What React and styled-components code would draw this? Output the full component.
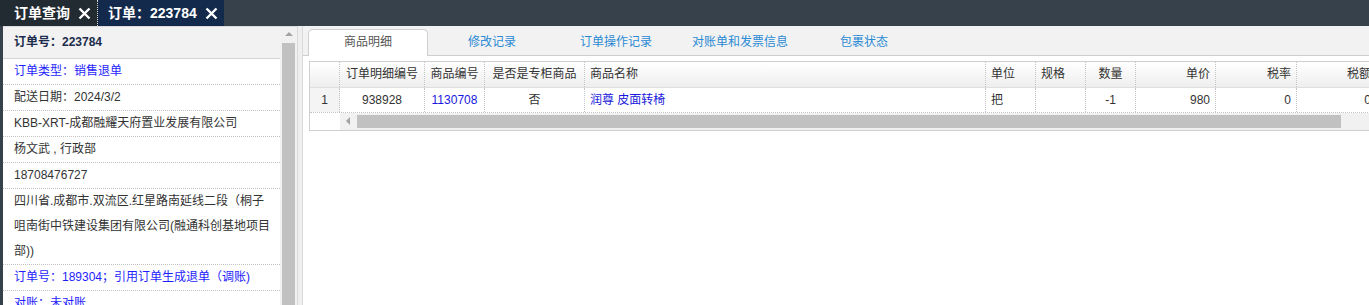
import React from 'react'
import styled, { createGlobalStyle } from 'styled-components'

const GlobalStyle = createGlobalStyle`
    html, body {
        margin: 0;
        padding: 0;
        height: 100%;
        overflow: hidden;
        background: #37414c;
    }
    body {
        font-family: "Liberation Sans", "Noto Sans CJK SC", sans-serif;
        font-size: 12px;
        color: #333;
    }
    #root {
        height: 100%;
    }
`

const Page = styled.div`
    display: flex;
    flex-direction: column;
    height: 100vh;
`

const TopBar = styled.div`
    display: flex;
    height: 26px;
    flex-shrink: 0;
    background: #37414c;
`

const PageTab = styled.div`
    display: flex;
    align-items: center;
    gap: 8px;
    padding: 0 6px 0 ${p => p.$padLeft || 12}px;
    background: ${p => (p.$active ? '#142a4c' : '#222a32')};
    border-right: ${p => (p.$active ? 'none' : '1px dotted #d8d8d8')};
    color: #fff;
    font-size: 14px;
    font-weight: bold;
    line-height: 26px;
    white-space: nowrap;
`

const CloseIcon = () => (
    <svg width="13" height="13" viewBox="0 0 13 13">
        <path d="M1.5 1.5 L11.5 11.5 M11.5 1.5 L1.5 11.5" stroke="#fff" strokeWidth="2.4" />
    </svg>
)

const Main = styled.div`
    flex: 1;
    display: flex;
    min-height: 0;
    padding-left: 3px;
`

const Sidebar = styled.div`
    width: 294px;
    flex-shrink: 0;
    display: flex;
    background: #fff;
    border-top: 1px solid #dcdcdc;
`

const SideContent = styled.div`
    flex: 1;
    overflow: hidden;
`

const SideHeader = styled.div`
    height: 31px;
    line-height: 31px;
    padding-left: 11px;
    background: #f2f2f2;
    border-bottom: 1px solid #d4d4d4;
    color: #1d2c4c;
    font-weight: bold;
`

const InfoRow = styled.div`
    padding: 0 8px 0 11px;
    line-height: 25px;
    border-bottom: 1px dotted #c2c2c2;
    color: ${p => (p.$link ? '#1e1eff' : '#333')};
`

const ScrollTrack = styled.div`
    width: 17px;
    flex-shrink: 0;
    display: flex;
    flex-direction: column;
    align-items: center;
    background: #f1f1f1;
`

const ArrowButton = styled.div`
    width: 17px;
    height: 16px;
    flex-shrink: 0;
    display: flex;
    align-items: center;
    justify-content: center;
    background: #f1f1f1;

    &::before {
        content: '';
        border: 4px solid transparent;
        ${p => (p.$dir === 'left'
            ? 'border-right-color: #a3a3a3; border-left-width: 0; margin-left: -2px;'
            : 'border-bottom-color: #a3a3a3; border-top-width: 0; margin-top: -2px;')}
    }
`

const VThumb = styled.div`
    flex: 1;
    width: 13px;
    background: #c1c1c1;
`

const Splitter = styled.div`
    width: 4px;
    flex-shrink: 0;
    background: #efefef;
    border-left: 1px solid #dadada;
    border-right: 1px solid #dadada;
`

const RightPanel = styled.div`
    flex: 1;
    min-width: 0;
    background: #fff;
    overflow: hidden;
`

const TabBar = styled.div`
    display: flex;
    gap: 4px;
    height: 26px;
    padding: 3px 0 0 5px;
    background: #f2f2f2;
    border-bottom: 1px solid #cfcfcf;
`

const Tab = styled.div`
    width: 118px;
    height: ${p => (p.$active ? '26px' : '25px')};
    line-height: 25px;
    text-align: center;
    color: ${p => (p.$active ? '#555' : '#2a8ad4')};
    background: ${p => (p.$active ? '#fff' : 'transparent')};
    border: 1px solid ${p => (p.$active ? '#cfcfcf' : 'transparent')};
    border-bottom: none;
    border-radius: 5px 5px 0 0;
    white-space: nowrap;
`

const Content = styled.div`
    padding: 5px 0 0 6px;
`

const Grid = styled.div`
    width: 1220px;
    border: 1px solid #d0d0d0;
`

const COLS = '30px 85px 60px 100px 401px 50px 50px 50px 80px 81px 80px 1fr'

const GridRow = styled.div`
    display: grid;
    grid-template-columns: ${COLS};
    height: ${p => (p.$head ? '26px' : '25px')};
    background: ${p => (p.$head ? 'linear-gradient(#ffffff, #eeeeee)' : '#fff')};
    border-bottom: ${p => (p.$head ? '1px solid #dedede' : '1px dotted #c4c4c4')};
    box-sizing: border-box;
`

const Cell = styled.div`
    box-sizing: border-box;
    padding: 0 5px;
    line-height: 24px;
    text-align: ${p => p.$align || 'left'};
    color: ${p => (p.$link ? '#1818dc' : '#333')};
    background: ${p => (p.$rn ? '#f4f4f4' : 'transparent')};
    border-right: 1px dotted #c4c4c4;
    white-space: nowrap;
    overflow: hidden;
`

const HScroll = styled.div`
    display: flex;
    height: 17px;
    background: #f1f1f1;
`

const Corner = styled.div`
    width: 30px;
    flex-shrink: 0;
    background: #fff;
`

const HThumb = styled.div`
    width: 984px;
    flex-shrink: 0;
    margin: 2px 0;
    background: #c1c1c1;
`

const columns = [
    { title: '', align: 'center', rn: true },
    { title: '订单明细编号', align: 'center' },
    { title: '商品编号', align: 'center' },
    { title: '是否是专柜商品', align: 'center' },
    { title: '商品名称', align: 'left' },
    { title: '单位', align: 'left' },
    { title: '规格', align: 'left' },
    { title: '数量', align: 'center' },
    { title: '单价', align: 'right' },
    { title: '税率', align: 'right' },
    { title: '税额', align: 'right' },
    { title: '', align: 'left' },
]

const row = [
    { v: '1' },
    { v: '938928' },
    { v: '1130708', link: true },
    { v: '否' },
    { v: '润尊 皮面转椅', link: true },
    { v: '把' },
    { v: '' },
    { v: '-1' },
    { v: '980' },
    { v: '0' },
    { v: '0' },
    { v: '' },
]

const info = [
    { text: '订单类型：销售退单', link: true },
    { text: '配送日期：2024/3/2' },
    { text: 'KBB-XRT-成都融耀天府置业发展有限公司' },
    { text: '杨文武 , 行政部' },
    { text: '18708476727' },
    { text: '四川省.成都市.双流区.红星路南延线二段（桐子咀南街中铁建设集团有限公司(融通科创基地项目部))' },
    { text: '订单号：189304；引用订单生成退单（调账)', link: true },
    { text: '对账：未对账', link: true },
]

const tabs = ['商品明细', '修改记录', '订单操作记录', '对账单和发票信息', '包裹状态']

export default function App() {
    return (
        <>
            <GlobalStyle />
            <Page>
                <TopBar>
                    <PageTab $padLeft={14}>订单查询<CloseIcon /></PageTab>
                    <PageTab $active $padLeft={10}>订单：223784<CloseIcon /></PageTab>
                </TopBar>
                <Main>
                    <Sidebar>
                        <SideContent>
                            <SideHeader>订单号：223784</SideHeader>
                            {info.map((item, i) => (
                                <InfoRow key={i} $link={item.link}>{item.text}</InfoRow>
                            ))}
                        </SideContent>
                        <ScrollTrack>
                            <ArrowButton $dir="up" />
                            <VThumb />
                        </ScrollTrack>
                    </Sidebar>
                    <Splitter />
                    <RightPanel>
                        <TabBar>
                            {tabs.map((t, i) => (
                                <Tab key={t} $active={i === 0}>{t}</Tab>
                            ))}
                        </TabBar>
                        <Content>
                            <Grid>
                                <GridRow $head>
                                    {columns.map((c, i) => (
                                        <Cell key={i} $align={c.align}>{c.title}</Cell>
                                    ))}
                                </GridRow>
                                <GridRow>
                                    {row.map((c, i) => (
                                        <Cell key={i} $align={columns[i].align} $link={c.link} $rn={columns[i].rn}>
                                            {c.v}
                                        </Cell>
                                    ))}
                                </GridRow>
                                <HScroll>
                                    <Corner />
                                    <ArrowButton $dir="left" />
                                    <HThumb />
                                </HScroll>
                            </Grid>
                        </Content>
                    </RightPanel>
                </Main>
            </Page>
        </>
    )
}
